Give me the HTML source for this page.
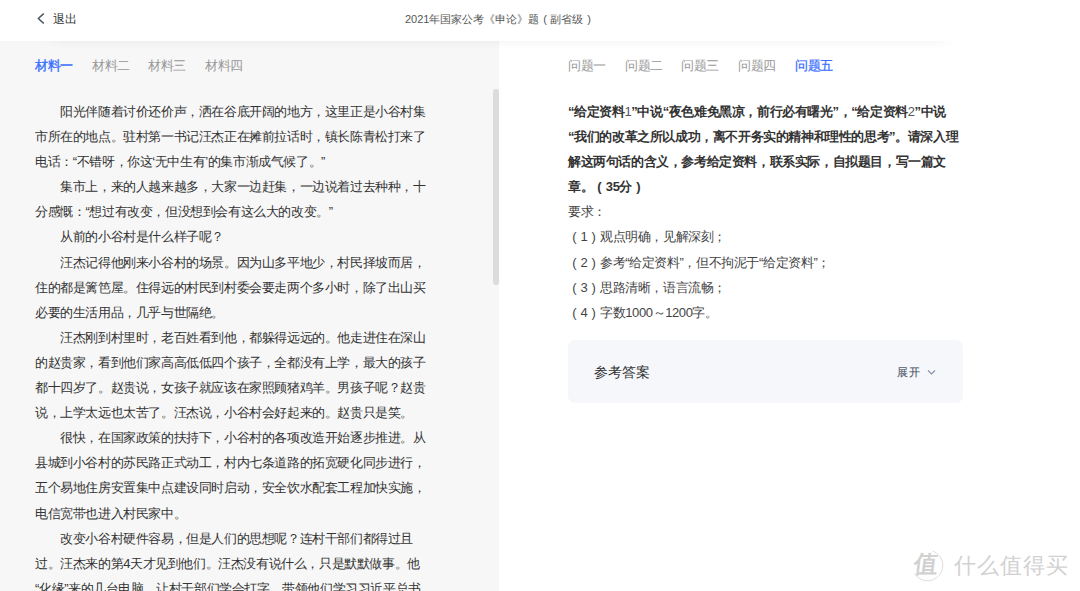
<!DOCTYPE html>
<html><head><meta charset="utf-8">
<style>
*{margin:0;padding:0;box-sizing:border-box}
html,body{width:1080px;height:591px;overflow:hidden;background:#fff;font-family:"Liberation Sans",sans-serif;color:#333}
.hdr{position:absolute;left:0;top:0;width:1080px;height:41px;background:#fff;z-index:3}
.hshadow{position:absolute;left:36px;top:41px;width:922px;height:8px;background:linear-gradient(rgba(0,0,0,0.028),rgba(0,0,0,0));z-index:4;-webkit-mask-image:linear-gradient(to right,transparent,#000 3%,#000 97%,transparent)}
.pl{font-style:normal;display:inline-block;width:12.6px;text-align:center;letter-spacing:0}
.nb{font-weight:normal;color:#555}
.back{position:absolute;left:37px;top:13px;width:8px;height:11px}
.exit{position:absolute;left:53px;top:10px;font-size:11.7px;line-height:18px;color:#333;white-space:nowrap}
.title{position:absolute;left:405px;top:10px;font-size:11px;line-height:18px;color:#555;white-space:nowrap}
.left{position:absolute;left:0;top:41px;width:499px;height:550px;background:#f7f7f7}
.tabs{position:absolute;top:56.7px;white-space:nowrap;font-size:13px;letter-spacing:-0.4px;line-height:18px;color:#999}
.tabs span{position:absolute;top:0}
.tabs .on{color:#3a70ff;-webkit-text-stroke:0.35px #3a70ff}
.ltext{position:absolute;left:35px;top:99px;font-size:13px;letter-spacing:-0.4px;line-height:25.1px;color:#333;white-space:nowrap}
.ind{padding-left:25.2px}
.sb{position:absolute;left:493px;top:88.5px;width:6px;height:196px;border-radius:3px;background:#dcdcdc}
.rtext{position:absolute;left:568px;top:99px;font-size:13px;letter-spacing:-0.4px;line-height:25.1px;color:#333;white-space:nowrap}
.b{font-weight:bold;color:#333}
.r{color:#444}
.box{position:absolute;left:568px;top:340px;width:395px;height:63px;border-radius:7px;background:#f5f7fa}
.ans{position:absolute;left:594px;top:362px;font-size:14.4px;line-height:20px;color:#333;white-space:nowrap}
.zk{position:absolute;left:897px;top:362.7px;-webkit-text-stroke:0.15px #535b6e;font-size:11px;letter-spacing:0.7px;line-height:18px;color:#535b6e;white-space:nowrap}
.chev{position:absolute;left:927px;top:369px;width:9px;height:7px}
.wm{position:absolute;left:912px;top:550px;width:160px;height:35px}
</style></head><body>
<div class="hdr">
  <svg class="back" viewBox="0 0 8 11"><path d="M6.4 0.9 L1.3 5.5 L6.4 10.1" fill="none" stroke="#4b5362" stroke-width="1.45" stroke-linecap="round" stroke-linejoin="round"/></svg>
  <div class="exit">退出</div>
  <div class="title">2021年国家公考《申论》题<i class="pl" style="width:11px">(</i>副省级<i class="pl" style="width:11px">)</i></div>
</div>
<div class="hshadow"></div>
<div class="left"></div>
<div class="tabs" style="left:0">
  <span class="on" style="left:35px">材料一</span>
  <span style="left:92px">材料二</span>
  <span style="left:148px">材料三</span>
  <span style="left:205px">材料四</span>
</div>
<div class="sb"></div>
<div class="ltext">
<div class="ind">阳光伴随着讨价还价声，洒在谷底开阔的地方，这里正是小谷村集</div>
<div>市所在的地点。驻村第一书记汪杰正在摊前拉话时，镇长陈青松打来了</div>
<div>电话：“不错呀，你这‘无中生有’的集市渐成气候了。”</div>
<div class="ind">集市上，来的人越来越多，大家一边赶集，一边说着过去种种，十</div>
<div>分感慨：“想过有改变，但没想到会有这么大的改变。”</div>
<div class="ind">从前的小谷村是什么样子呢？</div>
<div class="ind">汪杰记得他刚来小谷村的场景。因为山多平地少，村民择坡而居，</div>
<div>住的都是篱笆屋。住得远的村民到村委会要走两个多小时，除了出山买</div>
<div>必要的生活用品，几乎与世隔绝。</div>
<div class="ind">汪杰刚到村里时，老百姓看到他，都躲得远远的。他走进住在深山</div>
<div>的赵贵家，看到他们家高高低低四个孩子，全都没有上学，最大的孩子</div>
<div>都十四岁了。赵贵说，女孩子就应该在家照顾猪鸡羊。男孩子呢？赵贵</div>
<div>说，上学太远也太苦了。汪杰说，小谷村会好起来的。赵贵只是笑。</div>
<div class="ind">很快，在国家政策的扶持下，小谷村的各项改造开始逐步推进。从</div>
<div>县城到小谷村的苏民路正式动工，村内七条道路的拓宽硬化同步进行，</div>
<div>五个易地住房安置集中点建设同时启动，安全饮水配套工程加快实施，</div>
<div>电信宽带也进入村民家中。</div>
<div class="ind">改变小谷村硬件容易，但是人们的思想呢？连村干部们都得过且</div>
<div>过。汪杰来的第4天才见到他们。汪杰没有说什么，只是默默做事。他</div>
<div>“化缘”来的几台电脑，让村干部们学会打字，带领他们学习习近平总书</div>
</div>
<div class="tabs" style="left:0">
  <span style="left:568px">问题一</span>
  <span style="left:625px">问题二</span>
  <span style="left:681px">问题三</span>
  <span style="left:738px">问题四</span>
  <span class="on" style="left:795px;-webkit-text-stroke:0.25px #3a70ff">问题五</span>
</div>
<div class="rtext">
<div class="b">“给定资料<span class="nb">1</span>”中说“夜色难免黑凉，前行必有曙光”，“给定资料<span class="nb">2</span>”中说</div>
<div class="b">“我们的改革之所以成功，离不开务实的精神和理性的思考”。请深入理</div>
<div class="b">解这两句话的含义，参考给定资料，联系实际，自拟题目，写一篇文</div>
<div class="b">章。<i class="pl">(</i>35分<i class="pl">)</i></div>
<div class="r">要求：</div>
<div class="r"><i class="pl">(</i>1<i class="pl">)</i>观点明确，见解深刻；</div>
<div class="r"><i class="pl">(</i>2<i class="pl">)</i>参考“给定资料”，但不拘泥于“给定资料”；</div>
<div class="r"><i class="pl">(</i>3<i class="pl">)</i>思路清晰，语言流畅；</div>
<div class="r"><i class="pl">(</i>4<i class="pl">)</i>字数1000～1200字。</div>
</div>
<div class="box"></div>
<div class="ans">参考答案</div>
<div class="zk">展开</div>
<svg class="chev" viewBox="0 0 9 7"><path d="M1 1.5 L4.5 5 L8 1.5" fill="none" stroke="#8d93a6" stroke-width="1.2"/></svg>
<svg class="wm" viewBox="0 0 160 35">
  <path d="M 20.7 1.1 A 15.3 15.3 0 1 1 2.25 23.15" fill="none" stroke="#dedede" stroke-width="1"/>
  <text x="0" y="0" font-size="24" fill="#d0d0d0" stroke="#d0d0d0" stroke-width="0.7" font-family="Liberation Sans" transform="translate(1,22) skewX(-7)">值</text>
  <text x="41.5" y="23" font-size="22" letter-spacing="1.1" fill="#d2d2d2" font-family="Liberation Sans">什么值得买</text>
</svg>
</body></html>
